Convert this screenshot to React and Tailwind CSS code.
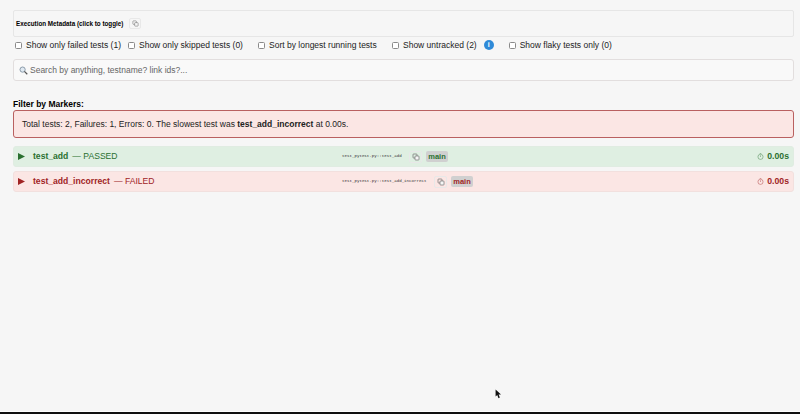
import React from "react";

function CopyIcon({ className }) {
  return (
    <svg viewBox="0 0 12 12" className={className} fill="none" stroke="currentColor" strokeWidth="1">
      <rect x="1.5" y="1.5" width="6" height="6" rx="1" />
      <rect x="4.5" y="4.5" width="6" height="6" rx="1" fill="#f6f6f6" />
    </svg>
  );
}

function Stopwatch({ className }) {
  return (
    <svg viewBox="0 0 12 12" className={className} fill="none" stroke="currentColor" strokeWidth="1">
      <circle cx="6" cy="6.6" r="4.4" />
      <path d="M4.6 0.8h2.8M6 4v2.8" />
    </svg>
  );
}

function Check({ label, className = "" }) {
  return (
    <label className={`flex items-center gap-[4px] ${className}`}>
      <input type="checkbox" className="m-0 h-[7px] w-[7px] appearance-none rounded-[1.5px] border border-[#8a8a8a] bg-white" />
      <span>{label}</span>
    </label>
  );
}

function TestRow({ name, status, path, bg, border, color, pathW }) {
  return (
    <div className={`flex h-[21px] items-center rounded-[3px] border pr-[4px] pl-[4px] ${bg} ${border} ${color}`}>
      <svg viewBox="0 0 7 7" className="h-[7px] w-[7px] shrink-0" fill="currentColor">
        <path d="M0 0 L7 3.5 L0 7 Z" />
      </svg>
      <span className="ml-[8px] w-[309px] shrink-0 text-[8.6px] whitespace-nowrap">
        <b className="font-bold">{name}</b>
        <span className="ml-[4px]">— {status}</span>
      </span>
      <span className={`shrink-0 font-['Liberation_Mono',monospace] text-[4.15px] whitespace-nowrap text-[#333] ${pathW}`}>{path}</span>
      <span className="ml-[7px] flex h-[12px] w-[13px] shrink-0 items-center justify-center rounded-[2px] border border-[#e8e8e8] text-[#666]">
        <CopyIcon className="h-[8px] w-[8px]" />
      </span>
      <span className="ml-[4px] flex h-[11px] w-[22px] items-center justify-center rounded-[2px] bg-[#d0d0d0] text-[7.5px] font-bold">main</span>
      <span className="ml-auto flex items-center gap-[3px] text-[8.7px] font-bold">
        <Stopwatch className="h-[7px] w-[7px] opacity-70" />
        0.00s
      </span>
    </div>
  );
}

export default function App() {
  return (
    <div className="relative flex h-[414px] w-[800px] flex-col overflow-hidden bg-[#f6f6f6] font-['Liberation_Sans',Arial,sans-serif] text-black">
      <main className="flex flex-1 flex-col pt-[10px] pr-[6px] pl-[13px]">
        <div className="flex h-[27px] shrink-0 items-center gap-[6px] rounded-[2px] border border-[#e6e6e6] pl-[2px]">
          <span className="text-[6.3px] font-bold">Execution Metadata (click to toggle)</span>
          <span className="flex h-[11px] w-[12px] items-center justify-center rounded-[2px] border border-[#e8e8e8] text-[#777]">
            <CopyIcon className="h-[7px] w-[7px]" />
          </span>
        </div>
        <div className="mt-[2px] flex h-[12px] items-center pl-[2px] text-[8.5px] text-[#222]">
          <Check label="Show only failed tests (1)" className="w-[113px]" />
          <Check label="Show only skipped tests (0)" className="w-[130px]" />
          <Check label="Sort by longest running tests" className="w-[134px]" />
          <Check label="Show untracked (2)" />
          <span className="ml-[7px] flex h-[10px] w-[10px] items-center justify-center rounded-full bg-[#2f8ad8] text-[7px] font-bold text-white">i</span>
          <Check label="Show flaky tests only (0)" className="ml-[15px]" />
        </div>
        <div className="mt-[8px] flex h-[22px] shrink-0 items-center rounded-[3px] border border-[#e2dede] bg-[#f9f9f9] pl-[5px] text-[8.5px] text-[#666]">
          <svg viewBox="0 0 10 10" className="h-[9px] w-[9px] shrink-0" fill="none">
            <circle cx="4" cy="4" r="2.9" stroke="#8a9aa8" strokeWidth="1.1" fill="#dfe9f2" />
            <path d="M6 6 L9.2 9.2" stroke="#555" strokeWidth="1.4" />
          </svg>
          <span className="ml-[2px]">Search by anything, testname? link ids?...</span>
        </div>
        <div className="mt-[18px] h-[11px] text-[8.5px] leading-[11px] font-bold">Filter by Markers:</div>
        <div className="flex h-[28px] shrink-0 items-center rounded-[3px] border border-[#b96060] bg-[#fbe6e4] pl-[8px] text-[8.5px] text-[#222]">
          <span>Total tests: 2, Failures: 1, Errors: 0. The slowest test was <b className="font-bold">test_add_incorrect</b> at 0.00s.</span>
        </div>
        <div className="mt-[8px] flex flex-col gap-[4px]">
          <TestRow name="test_add" status="PASSED" path="test_pytest.py::test_add" bg="bg-[#dfefe2]" border="border-[#e0ece2]" color="text-[#2a7030]" pathW="w-[60px]" />
          <TestRow name="test_add_incorrect" status="FAILED" path="test_pytest.py::test_add_incorrect" bg="bg-[#fbe6e4]" border="border-[#f2e0de]" color="text-[#a02424]" pathW="w-[85px]" />
        </div>
      </main>
      <div className="h-[3px] shrink-0 border-t border-white bg-[#111]" />
      <svg viewBox="0 0 8 12" className="absolute top-[389px] left-[495px] h-[10px] w-[7px]" fill="#111">
        <path d="M0.5 0.5 L0.5 9 L2.5 7.2 L4 11 L5.6 10.3 L4.1 6.7 L7 6.5 Z" />
      </svg>
    </div>
  );
}
